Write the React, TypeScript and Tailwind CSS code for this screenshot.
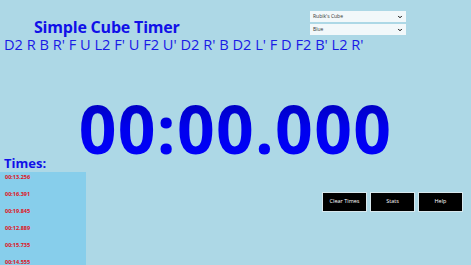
import { ChevronDown } from "lucide-react";

const TIMES = ["00:13.256", "00:16.391", "00:19.845", "00:12.889", "00:15.735", "00:14.555"];

const SCRAMBLE = "D2 R B R' F U L2 F' U F2 U' D2 R' B D2 L' F D F2 B' L2 R'";

function Select({ value }: { value: string }) {
  return (
    <div className="w-[96px] h-[11px] bg-[#f2f8fa] flex items-center justify-between px-[3px]">
      <span className="text-[5px] text-[#333]">{value}</span>
      <ChevronDown className="w-[6px] h-[6px] text-black" strokeWidth={4} />
    </div>
  );
}

function Btn({ label }: { label: string }) {
  return (
    <button className="w-[45px] h-[20px] bg-black border border-[#d8e8ee] text-white text-[5.5px] flex items-center justify-center">
      {label}
    </button>
  );
}

export default function App() {
  return (
    <div
      className="w-[471px] h-[265px] bg-[#add8e6] overflow-hidden flex flex-col"
      style={{ fontFamily: "'Open Sans', 'Noto Sans', sans-serif" }}
    >
      {/* Header */}
      <div className="h-[37px] flex">
        <div className="mt-[19px] ml-[34px] text-[16px] tracking-[-0.2px] font-bold leading-none text-[#1010e8]">
          Simple Cube Timer
        </div>
        <div className="ml-auto mr-[65px] mt-[11px] flex flex-col gap-[2px]">
          <Select value="Rubik's Cube" />
          <Select value="Blue" />
        </div>
      </div>

      {/* Scramble */}
      <div className="ml-[4px] text-[14.6px] leading-none text-[#1a1ae6] whitespace-nowrap">{SCRAMBLE}</div>

      {/* Timer */}
      <div className="mt-[43px] h-[62px] text-center text-[66px] tracking-[1.3px] font-bold leading-none">
        <span className="bg-gradient-to-b from-[#0000a0] via-[#0000ee] to-[#0000ff] bg-clip-text text-transparent">
          00:00.000
        </span>
      </div>

      {/* Bottom */}
      <div className="flex flex-1">
        <div className="w-[86px] flex flex-col">
          <div className="ml-[4px] text-[13px] font-bold leading-none text-[#1010e8] h-[15px]">Times:</div>
          <div className="flex-1 bg-[#87ceeb] pl-[5px] pt-[3px] flex flex-col gap-[11.5px]">
            {TIMES.map((t) => (
              <div key={t} className="text-[5.5px] font-bold leading-none text-[#e01020]">
                {t}
              </div>
            ))}
          </div>
        </div>
        <div className="ml-auto mr-[8px] mt-[35px] flex gap-[3px] items-start">
          <Btn label="Clear Times" />
          <Btn label="Stats" />
          <Btn label="Help" />
        </div>
      </div>
    </div>
  );
}
